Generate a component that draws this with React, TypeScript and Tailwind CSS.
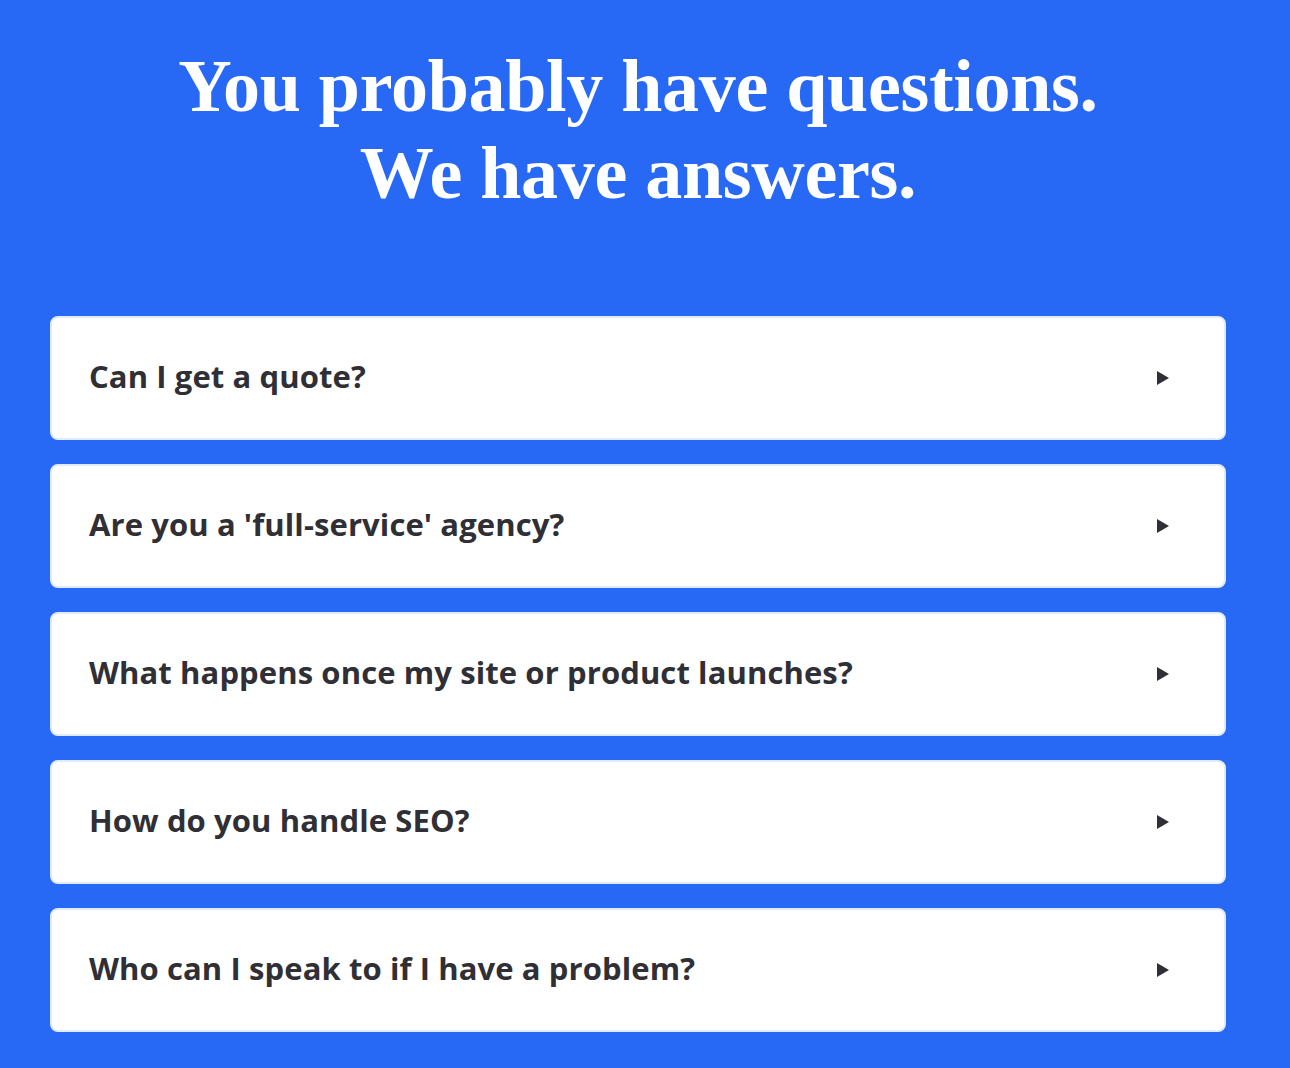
import React from "react";

const questions = [
  "Can I get a quote?",
  "Are you a 'full-service' agency?",
  "What happens once my site or product launches?",
  "How do you handle SEO?",
  "Who can I speak to if I have a problem?",
];

export default function App() {
  return (
    <div className="min-h-[1068px] w-full bg-[#2768f5] pl-[50px] pr-[64px] pt-[43px] pb-[36px]">
      <h1
        className="text-center text-[74px] font-bold leading-[87px] tracking-[-0.3px] text-white"
        style={{ fontFamily: '"Liberation Serif", "DejaVu Serif", serif' }}
      >
        You probably have questions.
        <br />
        We have answers.
      </h1>
      <div className="mt-[99px] flex flex-col gap-[24px]">
        {questions.map((q) => (
          <div
            key={q}
            className="flex h-[124px] items-center justify-between rounded-[8px] border-2 border-[#e2ebfc] bg-white pl-[37px] pr-[55px]"
          >
            <span
              className="pb-[3px] text-[31px] font-bold tracking-[0.1px] text-[#2f2f35]"
              style={{ fontFamily: '"Open Sans", Lato, sans-serif' }}
            >
              {q}
            </span>
            <svg width="12" height="14" viewBox="0 0 12 14" className="shrink-0">
              <path d="M0 0 L12 7 L0 14 Z" fill="#2f2f35" />
            </svg>
          </div>
        ))}
      </div>
    </div>
  );
}
